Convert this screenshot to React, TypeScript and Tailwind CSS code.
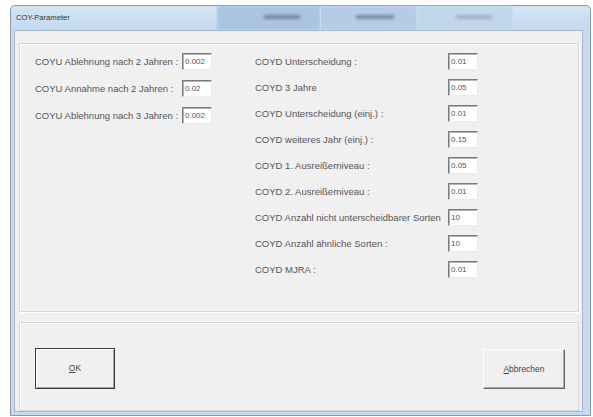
import React from "react";

const leftRows: [string, string][] = [
  ["COYU Ablehnung nach 2 Jahren :", "0.002"],
  ["COYU Annahme nach 2 Jahren :", "0.02"],
  ["COYU Ablehnung nach 3 Jahren :", "0.002"],
];

const rightRows: [string, string][] = [
  ["COYD Unterscheidung :", "0.01"],
  ["COYD 3 Jahre", "0.05"],
  ["COYD Unterscheidung (einj.) :", "0.01"],
  ["COYD weiteres Jahr (einj.) :", "0.15"],
  ["COYD 1. Ausreißerniveau :", "0.05"],
  ["COYD 2. Ausreißerniveau :", "0.01"],
  ["COYD Anzahl nicht unterscheidbarer Sorten", "10"],
  ["COYD Anzahl ähnliche Sorten :", "10"],
  ["COYD MJRA :", "0.01"],
];

function Field({ value }: { value: string }) {
  return (
    <div className="w-[30px] h-[17px] bg-white border border-t-[#7a7a7a] border-l-[#7a7a7a] border-r-[#ececec] border-b-[#ececec] shadow-[inset_1px_1px_0_#b4b4b4] pl-[2px] flex items-center text-[8px] text-[#555] leading-none">
      {value}
    </div>
  );
}

export default function App() {
  return (
    <div className="w-[593px] h-[417px] bg-white pt-[5px] pl-[10px] overflow-hidden font-['Liberation_Sans',Arial,sans-serif]">
      <div className="w-[581px] h-[411px] bg-[#c6daf0] border border-[#8a98a8] rounded-t-[5px] flex flex-col pl-[3px] pr-[7px] pb-[3px]">
        {/* caption bar */}
        <div className="h-[24px] relative flex items-center bg-gradient-to-b from-[#d4e4f5] to-[#c4d9ef] -ml-[3px] -mr-[7px] px-[5px] rounded-t-[5px]">
          <span className="text-[7.6px] text-[#333] leading-none">COY-Parameter</span>
          <div className="absolute left-[206px] top-0 h-[24px] w-[103px] bg-[#aac4e2] blur-[1px]" />
          <div className="absolute left-[309px] top-0 h-[24px] w-[97px] bg-[#b5cce7] blur-[1px]" />
          <div className="absolute left-[406px] top-0 h-[24px] w-[95px] bg-[#c2d6ec] blur-[1px]" />
          <div className="absolute left-[253px] top-[9px] h-[4px] w-[36px] bg-[#7587a0] blur-[1.5px]" />
          <div className="absolute left-[345px] top-[9px] h-[4px] w-[38px] bg-[#788aa2] blur-[1.5px]" />
          <div className="absolute left-[445px] top-[9px] h-[4px] w-[36px] bg-[#a0b1c5] blur-[1.5px]" />
          <div className="absolute left-[309px] top-0 h-[24px] w-[1px] bg-[#cadcf0]" />
          <div className="absolute left-[406px] top-0 h-[24px] w-[1px] bg-[#d0e0f2]" />
        </div>

        {/* client area */}
        <div className="flex-1 bg-[#f0f0f0] border border-[#a3b6ca] flex flex-col pl-[4px] pr-[3px] pt-[12px]">
          <div className="h-[269px] border border-[#d6d6d6] shadow-[inset_1px_1px_0_#ffffff,1px_1px_0_#ffffff] flex pl-[15px] pt-[5px] text-[9.5px] text-[#555]">
            <div className="w-[220px] flex flex-col">
              {leftRows.map(([label, value]) => (
                <div key={label} className="h-[27px] flex items-center">
                  <span className="w-[147px] whitespace-nowrap">{label}</span>
                  <div className="self-start mt-[4px]">
                    <Field value={value} />
                  </div>
                </div>
              ))}
            </div>
            <div className="flex flex-col">
              {rightRows.map(([label, value]) => (
                <div key={label} className="h-[26px] flex items-center">
                  <span className="w-[193px] whitespace-nowrap">{label}</span>
                  <div className="self-start mt-[4px]">
                    <Field value={value} />
                  </div>
                </div>
              ))}
            </div>
          </div>

          <div className="mt-[10px] flex-1 border border-[#d6d6d6] shadow-[inset_1px_1px_0_#ffffff] flex justify-between items-start pl-[15px] pr-[13px] pt-[25px] text-[8.5px] text-[#444]">
            <button className="w-[80px] h-[41px] bg-[#f0f0f0] border border-[#3a3a3a] shadow-[inset_1px_1px_0_#ffffff,inset_-1px_-1px_0_#a0a0a0] flex items-center justify-center">
              <span>
                <span className="underline">O</span>K
              </span>
            </button>
            <button className="mt-[1px] w-[82px] h-[40px] bg-[#f0f0f0] border border-t-[#ffffff] border-l-[#ffffff] border-r-[#6a6a6a] border-b-[#6a6a6a] shadow-[inset_-1px_-1px_0_#a9a9a9] flex items-center justify-center">
              <span>
                <span className="underline">A</span>bbrechen
              </span>
            </button>
          </div>
        </div>
      </div>
    </div>
  );
}
